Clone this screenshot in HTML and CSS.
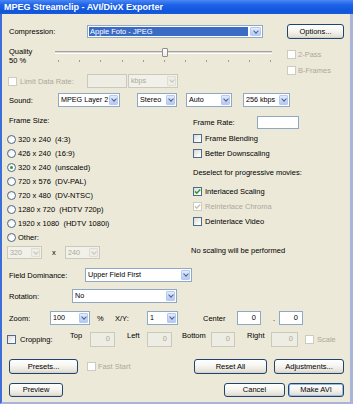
FILE: index.html
```html
<!DOCTYPE html>
<html lang="en">
<head>
<meta charset="utf-8">
<title>MPEG Streamclip - AVI/DivX Exporter</title>
<link rel="stylesheet" href="styles.css">
</head>
<body>
<div class="window">
  <div class="titlebar">MPEG Streamclip - AVI/DivX Exporter</div>
  <div class="client">

    <div class="row r-comp">
      <span class="lbl w-comp">Compression:</span>
      <div class="select s-comp"><span class="val hl">Apple Foto - JPEG</span><span class="arrow"></span></div>
      <button class="btn b-options">Options...</button>
    </div>

    <div class="qsec">
      <div class="qleft">
        <div class="qrow">
          <div class="qlabel"><div>Quality</div><div>50 %</div></div>
          <div class="slider">
            <div class="track"></div>
            <div class="ticks"><i></i><i></i><i></i><i></i><i></i><i></i><i></i><i></i><i></i><i></i><i></i></div>
            <div class="thumb"></div>
          </div>
        </div>
        <div class="row r-limit">
          <span class="cb dis"></span>
          <span class="lbl dis-text w-limit">Limit Data Rate:</span>
          <span class="tb dis w-rate"></span>
          <div class="select dis s-kbps"><span class="val">kbps</span><span class="arrow"></span></div>
        </div>
      </div>
      <div class="qright">
        <div class="crow c-small"><span class="cb dis"></span><span class="dis-text">2-Pass</span></div>
        <div class="crow c-small"><span class="cb dis"></span><span class="dis-text">B-Frames</span></div>
      </div>
    </div>

    <div class="row r-sound">
      <span class="lbl w-sound">Sound:</span>
      <div class="select s-codec"><span class="val">MPEG Layer 2</span><span class="arrow"></span></div>
      <div class="select s-chan"><span class="val">Stereo</span><span class="arrow"></span></div>
      <div class="select s-rate"><span class="val">Auto</span><span class="arrow"></span></div>
      <div class="select s-bit"><span class="val">256 kbps</span><span class="arrow"></span></div>
    </div>

    <div class="mid">
      <div class="mleft">
        <div class="sect-title">Frame Size:</div>
        <div class="radios">
          <div class="rrow"><span class="rb"></span><span>320 x 240&nbsp; (4:3)</span></div>
          <div class="rrow"><span class="rb"></span><span>426 x 240&nbsp; (16:9)</span></div>
          <div class="rrow"><span class="rb on"></span><span>320 x 240&nbsp; (unscaled)</span></div>
          <div class="rrow"><span class="rb"></span><span>720 x 576&nbsp; (DV-PAL)</span></div>
          <div class="rrow"><span class="rb"></span><span>720 x 480&nbsp; (DV-NTSC)</span></div>
          <div class="rrow"><span class="rb"></span><span>1280 x 720&nbsp; (HDTV 720p)</span></div>
          <div class="rrow"><span class="rb"></span><span>1920 x 1080&nbsp; (HDTV 1080i)</span></div>
          <div class="rrow"><span class="rb"></span><span>Other:</span></div>
        </div>
        <div class="row r-dims">
          <div class="select dis s-dim"><span class="val">320</span><span class="arrow"></span></div>
          <span class="lbl x-sep">x</span>
          <div class="select dis s-dim"><span class="val">240</span><span class="arrow"></span></div>
        </div>
      </div>
      <div class="mright">
        <div class="row r-fr"><span class="lbl w-fr">Frame Rate:</span><span class="tb w-frtb"></span></div>
        <div class="crow c-fb"><span class="cb"></span><span>Frame Blending</span></div>
        <div class="crow"><span class="cb"></span><span>Better Downscaling</span></div>
        <div class="note deselect">Deselect for progressive movies:</div>
        <div class="crow c-is"><span class="cb"><svg width="7" height="7" viewBox="0 0 7 7"><path d="M1 3.4 L2.8 5.2 L6.2 1.6" fill="none" stroke="#21A121" stroke-width="1.5"/></svg></span><span>Interlaced Scaling</span></div>
        <div class="crow"><span class="cb dis"><svg width="7" height="7" viewBox="0 0 7 7"><path d="M1 3.4 L2.8 5.2 L6.2 1.6" fill="none" stroke="#C6C4B8" stroke-width="1.5"/></svg></span><span class="dis-text">Reinterlace Chroma</span></div>
        <div class="crow"><span class="cb"></span><span>Deinterlace Video</span></div>
        <div class="note noscale">No scaling will be performed</div>
      </div>
    </div>

    <div class="row r-fd">
      <span class="lbl w-fd">Field Dominance:</span>
      <div class="select s-fd"><span class="val">Upper Field First</span><span class="arrow"></span></div>
    </div>

    <div class="row r-rot">
      <span class="lbl w-rot">Rotation:</span>
      <div class="select s-rot"><span class="val">No</span><span class="arrow"></span></div>
    </div>

    <div class="row r-zoom">
      <span class="lbl w-zoom">Zoom:</span>
      <div class="select s-zoom"><span class="val">100</span><span class="arrow"></span></div>
      <span class="lbl pct">%</span>
      <span class="lbl w-xy">X/Y:</span>
      <div class="select s-xy"><span class="val">1</span><span class="arrow"></span></div>
      <span class="lbl w-center">Center</span>
      <span class="tb tb-c">0</span>
      <span class="lbl dot">.</span>
      <span class="tb tb-c">0</span>
    </div>

    <div class="row r-crop">
      <span class="cb"></span>
      <span class="lbl w-crop">Cropping:</span>
      <span class="lbl up w-top">Top</span>
      <span class="tb dis tb-top">0</span>
      <span class="lbl up w-left">Left</span>
      <span class="tb dis tb-left">0</span>
      <span class="lbl up w-bottom">Bottom</span>
      <span class="tb dis tb-bottom">0</span>
      <span class="lbl up w-right">Right</span>
      <span class="tb dis tb-right">0</span>
      <span class="cb dis cb-scale"></span>
      <span class="lbl dis-text scale-lbl">Scale</span>
    </div>

    <div class="row r-btn1">
      <button class="btn b-presets">Presets...</button>
      <span class="cb dis cb-fast"></span>
      <span class="lbl dis-text fast-lbl">Fast Start</span>
      <button class="btn b-reset">Reset All</button>
      <button class="btn b-adjust">Adjustments...</button>
    </div>

    <div class="row r-btn2">
      <button class="btn b-preview">Preview</button>
      <button class="btn b-cancel">Cancel</button>
      <button class="btn default b-make">Make AVI</button>
    </div>

  </div>
</div>
</body>
</html>
```

FILE: styles.css
```css
* { box-sizing: border-box; }
html, body { margin: 0; padding: 0; }
body {
  width: 353px;
  height: 404px;
  overflow: hidden;
  background: #ECE9D8;
  font-family: "Liberation Sans", Arial, sans-serif;
  font-size: 7.5px;
  line-height: 9px;
  color: #000;
}

.window {
  width: 353px;
  height: 404px;
  display: flex;
  flex-direction: column;
}

.titlebar {
  flex: none;
  height: 14px;
  padding-left: 4px;
  background: linear-gradient(#4A88F5, #1E62E6 35%, #0F56DC 80%, #1A5AD8);
  color: #fff;
  font-weight: bold;
  font-size: 9px;
  line-height: 14px;
  white-space: nowrap;
}

.client {
  flex: 1;
  display: flex;
  flex-direction: column;
  background: #ECE9D8;
  border-left: 2px solid #3C6DD8;
  border-right: 3px solid #A9B4DA;
  border-bottom: 2px solid #A9B4DA;
  padding: 0 6px 0 5px;
}

.row { flex: none; display: flex; align-items: center; }
.lbl { flex: none; white-space: nowrap; }
.dis-text { color: #ACA899; }

/* ---------- controls ---------- */
.btn {
  flex: none;
  height: 15px;
  padding: 0;
  border: 1px solid #1F4470;
  border-radius: 3px;
  background: linear-gradient(#FFFFFF, #F6F5F0 45%, #E6E3D9 85%, #D4CFC3);
  font: inherit;
  line-height: 12px;
  color: #000;
  text-align: center;
}
.btn.default { box-shadow: inset 0 0 0 1px #9DBBEA; }

.select {
  flex: none;
  height: 14px;
  display: flex;
  align-items: stretch;
  background: #fff;
  border: 1px solid #8FA8C4;
}
.select .val {
  flex: 1;
  min-width: 0;
  padding-left: 2px;
  font-size: 7.2px;
  line-height: 12px;
  white-space: nowrap;
}
.select .val.hl {
  margin: 1px;
  padding-left: 1px;
  font-size: 7.5px;
  line-height: 9px;
  background: #3A6CC6;
  color: #fff;
}
.select .arrow {
  flex: none;
  width: 9px;
  margin: 1px;
  border: 1px solid #B7C9F2;
  border-radius: 1px;
  background: linear-gradient(#E3EBFE, #C7D7FB 55%, #B5C9F5);
  display: flex;
  align-items: center;
  justify-content: center;
}
.select .arrow::after {
  content: "";
  width: 3px;
  height: 3px;
  border-right: 1.5px solid #4D6185;
  border-bottom: 1.5px solid #4D6185;
  transform: translateY(-1px) rotate(45deg);
}
.select.dis { border-color: #CBC8BC; background: #F1F0E9; color: #ACA899; }
.select.dis .arrow { border-color: #E0DDD2; background: #EEEDE6; }
.select.dis .arrow::after { border-color: #C6C4B8; }

.tb {
  flex: none;
  height: 14px;
  border: 1px solid #8FA8C4;
  background: #fff;
  text-align: right;
  padding-right: 4px;
  line-height: 12px;
}
.tb.dis { border-color: #CBC8BC; background: #EEEDE4; color: #ACA899; }

.cb {
  flex: none;
  width: 9px;
  height: 9px;
  border: 1px solid #4E6A8E;
  background: linear-gradient(135deg, #DAD9D2, #FFFFFF 85%);
  display: flex;
  align-items: center;
  justify-content: center;
}
.cb.dis { border-color: #CDCBBF; background: #FFFFFF; }
.cb svg { display: block; }

.rb {
  flex: none;
  width: 9px;
  height: 9px;
  border-radius: 50%;
  border: 1px solid #4E6A8E;
  background: radial-gradient(circle at 65% 65%, #FFFFFF 30%, #DEDDD6);
  display: flex;
  align-items: center;
  justify-content: center;
}
.rb.on::after {
  content: "";
  width: 3px;
  height: 3px;
  border-radius: 50%;
  background: #2E9A2E;
}

.crow { flex: none; display: flex; align-items: center; height: 15px; white-space: nowrap; }
.crow .cb + span { margin-left: 3px; }
.c-small { height: 9px; }
.c-small .cb + span { margin-left: 2px; }

/* ---------- compression ---------- */
.r-comp { margin-top: 10px; height: 15px; }
.w-comp { margin-left: 2px; width: 78px; }
.s-comp { width: 176px; height: 13px; }
.s-comp .arrow { width: 11px; }
.b-options { margin-left: 24px; width: 57px; }

/* ---------- quality ---------- */
.qsec { flex: none; display: flex; }
.qleft { flex: none; width: 280px; }
.qrow { display: flex; margin-top: 8px; height: 18px; }
.qlabel { flex: none; margin-left: 2px; width: 46px; }
.slider { position: relative; flex: none; width: 217px; height: 18px; }
.track {
  margin-top: 4px;
  height: 3px;
  border-top: 1px solid #A3A29E;
  border-bottom: 1px solid #FFFFFF;
  background: #DCDAD2;
}
.ticks {
  margin-top: 6px;
  height: 2px;
  padding: 0 1px 0 3px;
  display: flex;
  justify-content: space-between;
}
.ticks i { display: block; width: 1px; height: 2px; background: #9C9B96; }
.thumb {
  position: absolute;
  left: 107px;
  top: 1px;
  width: 6px;
  height: 9px;
  border: 1px solid #8E8F8C;
  border-radius: 1px;
  background: linear-gradient(#FFFFFF, #EDECE6);
}

.r-limit { margin-top: 9px; height: 14px; }
.r-limit > .cb { margin-left: 1px; }
.w-limit { margin-left: 3px; width: 67px; }
.w-rate { width: 40px; }
.s-kbps { margin-left: 1px; width: 50px; }

.qright { flex: none; padding-top: 11px; display: flex; flex-direction: column; gap: 7px; }

/* ---------- sound ---------- */
.r-sound { margin-top: 5px; height: 14px; }
.w-sound { margin-left: 2px; width: 49px; }
.s-codec { width: 62px; }
.s-chan { margin-left: 17px; width: 40px; }
.s-rate { margin-left: 9px; width: 46px; }
.s-bit { margin-left: 11px; width: 47px; }

/* ---------- frame size ---------- */
.mid { flex: none; display: flex; }
.mleft { flex: none; width: 186px; }
.sect-title { margin-top: 9px; height: 10px; line-height: 10px; margin-left: 2px; }
.radios { margin-top: 6px; }
.rrow { display: flex; align-items: center; height: 14px; white-space: nowrap; }
.rrow .rb + span { margin-left: 2px; }
.r-dims { margin-top: 2px; height: 13px; }
.s-dim { width: 35px; height: 13px; }
.x-sep { margin-left: 10px; width: 13px; }

.mright { flex: 1; }
.r-fr { margin-top: 9px; height: 13px; }
.w-fr { width: 64px; }
.w-frtb { width: 42px; height: 13px; }
.c-fb { margin-top: 2px; }
.note { white-space: nowrap; }
.deselect { margin-top: 7px; height: 10px; line-height: 10px; }
.c-is { margin-top: 6px; }
.noscale { margin-top: 17px; height: 9px; margin-left: -2px; }

/* ---------- lower rows ---------- */
.r-fd { margin-top: 9px; height: 14px; }
.w-fd { margin-left: 2px; width: 76px; }
.s-fd { width: 107px; }

.r-rot { margin-top: 7px; height: 14px; }
.w-rot { margin-left: 2px; width: 63px; }
.s-rot { width: 105px; }

.r-zoom { margin-top: 8px; height: 14px; }
.w-zoom { margin-left: 2px; width: 41px; }
.s-zoom { width: 40px; }
.pct { margin-left: 7px; width: 18px; }
.w-xy { width: 32px; }
.s-xy { width: 31px; }
.w-center { margin-left: 25px; width: 34px; }
.tb-c { width: 24px; }
.dot { margin-left: 12px; width: 6px; }

.r-crop { margin-top: 7px; height: 15px; }
.w-crop { margin-left: 4px; width: 50px; }
.up { align-self: flex-start; margin-top: -1px; }
.w-top { width: 20px; }
.tb-top { width: 25px; height: 15px; }
.w-left { margin-left: 12px; width: 20px; }
.tb-left { width: 25px; height: 15px; }
.w-bottom { margin-left: 10px; width: 29px; }
.tb-bottom { width: 24px; height: 15px; }
.w-right { margin-left: 12px; width: 24px; }
.tb-right { width: 27px; height: 15px; }
.cb-scale { margin-left: 7px; }
.scale-lbl { margin-left: 3px; }

.r-btn1 { margin-top: 12px; height: 15px; }
.b-presets { margin-left: 2px; width: 69px; }
.cb-fast { margin-left: 9px; }
.fast-lbl { margin-left: 2px; }
.b-reset { margin-left: auto; width: 73px; }
.b-adjust { margin-left: 7px; width: 70px; }

.r-btn2 { margin-top: 9px; height: 14px; }
.r-btn2 .btn { height: 14px; }
.b-preview { margin-left: 2px; width: 54px; }
.b-cancel { margin-left: auto; width: 61px; }
.b-make { margin-left: 3px; width: 56px; }
```
